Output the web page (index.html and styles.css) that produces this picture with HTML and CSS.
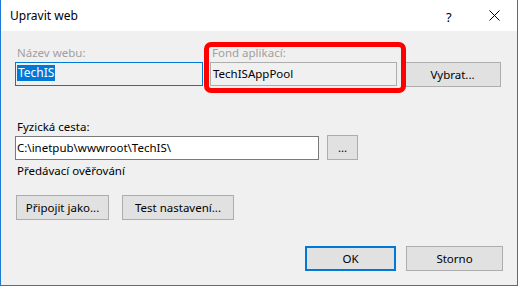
FILE: index.html
```html
<!DOCTYPE html>
<html lang="cs">
<head>
    <meta charset="UTF-8">
    <title>Upravit web</title>
    <link rel="stylesheet" href="styles.css">
</head>
<body>
    <div class="window">
        <div class="titlebar">
            <span class="title">Upravit web</span>
            <span class="help">?</span>
            <span class="close">
                <svg width="11" height="11" viewBox="0 0 11 11"><path d="M0.5 0.5 L10.5 10.5 M10.5 0.5 L0.5 10.5" stroke="#000" stroke-width="1" fill="none"/></svg>
            </span>
        </div>

        <div class="content">
            <div class="site-row">
                <div class="field">
                    <label class="disabled">Název webu:</label>
                    <div class="input focused"><span class="selected">TechIS</span></div>
                </div>
                <div class="field marked">
                    <label class="disabled">Fond aplikací:</label>
                    <div class="input readonly">TechISAppPool</div>
                </div>
                <button class="btn pick">Vybrat...</button>
            </div>

            <div class="field path-field">
                <label>Fyzická cesta:</label>
                <div class="path-row">
                    <div class="input path">C:\inetpub\wwwroot\TechIS\</div>
                    <button class="btn browse">...</button>
                </div>
            </div>

            <div class="auth-label">Předávací ověřování</div>
            <div class="auth-row">
                <button class="btn connect">Připojit jako...</button>
                <button class="btn test">Test nastavení...</button>
            </div>

            <div class="dialog-buttons">
                <button class="btn ok">OK</button>
                <button class="btn cancel">Storno</button>
            </div>
        </div>
    </div>
</body>
</html>
```

FILE: styles.css
```css
body {
    margin: 0;
    font-family: "Noto Sans", "Open Sans", sans-serif;
    font-size: 11.5px;
    color: #000;
    background: #fff;
}
.window {
    width: 518px;
    height: 286px;
    box-sizing: border-box;
    border: 1px solid #1c7ad3;
    border-top: none;
    background: #f0f0f0;
    display: flex;
    flex-direction: column;
}
.titlebar {
    height: 31px;
    background: #fff;
    display: flex;
    align-items: center;
    padding-left: 9px;
}
.title {
    flex: 1;
    line-height: 16px;
    font-size: 12px;
}
.help {
    width: 10px;
    margin-right: 33px;
    font-size: 13px;
    margin-top: 2px;
}
.close {
    display: flex;
    margin-right: 17px;
}
.content {
    flex: 1;
    display: flex;
    flex-direction: column;
    padding: 12px 14px 14px 14px;
}
label, .auth-label {
    display: block;
    line-height: 16px;
    padding-left: 2px;
    padding-top: 2px;
}
.disabled {
    color: #a0a0a0;
}
.site-row {
    display: grid;
    grid-template-columns: 188px 187px 97px;
    gap: 7px;
    align-items: end;
}
.field label {
    margin-bottom: 1px;
}
.input {
    height: 24px;
    box-sizing: border-box;
    border: 1px solid #7a7a7a;
    background: #fff;
    padding: 0 2px;
    line-height: 21px;
    white-space: nowrap;
    overflow: hidden;
}
.input.focused {
    border-color: #0078d7;
    background: #f0f0f0;
    padding: 2px 1px 0;
    line-height: 16px;
}
.selected {
    display: inline-block;
    background: #0078d7;
    color: #fff;
    padding: 0 1px;
    line-height: 16px;
    font-size: 12px;
}
.input.readonly {
    background: #f0f0f0;
    border-color: #adadad;
}
.marked {
    position: relative;
}
.marked::after {
    content: "";
    position: absolute;
    top: -1px;
    left: -6px;
    right: -9px;
    bottom: -7px;
    border: 5px solid #f00;
    border-radius: 7px;
}
.btn {
    font-family: inherit;
    font-size: 11.5px;
    color: #000;
    height: 25px;
    box-sizing: border-box;
    background: #e1e1e1;
    border: 1px solid #adadad;
    padding: 0;
    margin: 0;
}
.pick {
    margin-bottom: -1px;
}
.path-field {
    margin-top: 31px;
}
.path-row {
    display: flex;
    align-items: center;
    gap: 8px;
}
.input.path {
    width: 304px;
    padding-left: 1px;
}
.browse {
    width: 31px;
    margin-top: -1px;
}
.auth-label {
    margin-top: 1px;
}
.auth-row {
    display: flex;
    gap: 13px;
    margin-top: 16px;
    padding-left: 1px;
}
.connect {
    width: 93px;
}
.test {
    width: 112px;
}
.dialog-buttons {
    margin-top: auto;
    display: flex;
    justify-content: flex-end;
    gap: 10px;
}
.ok {
    width: 91px;
    border: 2px solid #0078d7;
}
.cancel {
    width: 97px;
}
```
